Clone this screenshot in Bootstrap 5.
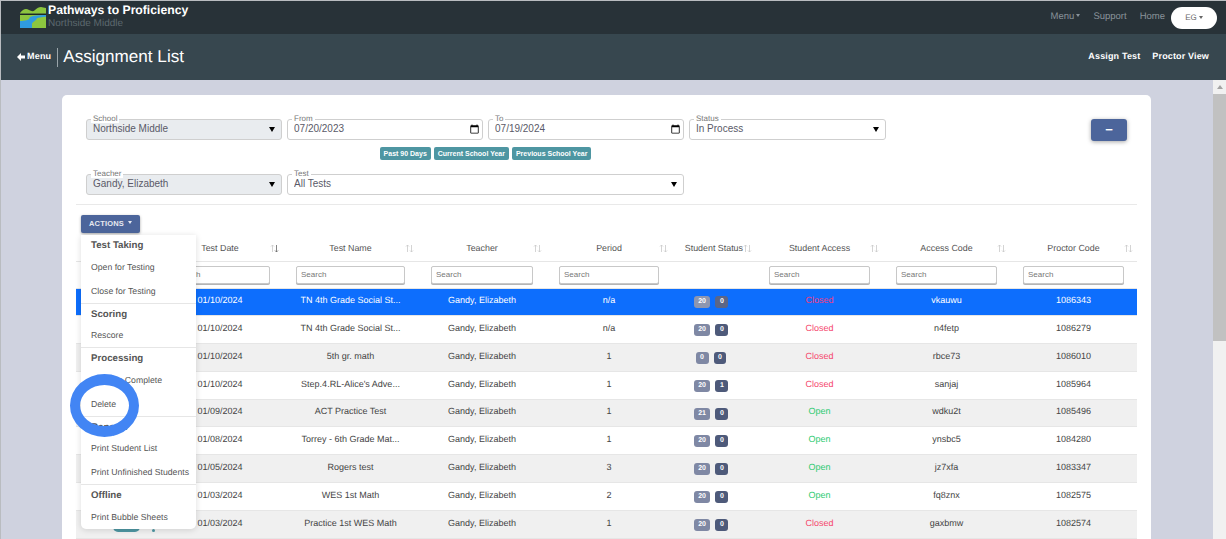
<!DOCTYPE html>
<html lang="en">
<head>
<meta charset="utf-8">
<title>Assignment List</title>
<link href="https://cdn.jsdelivr.net/npm/bootstrap@5.3.0/dist/css/bootstrap.min.css" rel="stylesheet">
<style>
html,body{height:539px;overflow:hidden}
body{font-family:"Liberation Sans",Arial,sans-serif;font-size:10px;color:#495057;background:#cfd2df;border-top:1px solid #b9bcc0;border-left:1px solid #b9bcc0;text-rendering:geometricPrecision}
.top-strip{height:33px;background:#283238;padding:0 9px 0 18px}
.brand-name{color:#fff;font-weight:700;font-size:12.2px;line-height:13px}
.brand-sub{color:#5d696f;font-size:10px;line-height:11px;margin-top:1px}
.brand-text{margin-left:1px;margin-top:-2px}
.top-link{color:#88939a;font-size:9.5px;text-decoration:none}
.top-links{gap:13px}
.caret-mini::after{content:"";display:inline-block;margin-left:2px;vertical-align:2px;border-top:3px solid currentColor;border-left:2.5px solid transparent;border-right:2.5px solid transparent}
.user-pill{width:46px;height:22px;border-radius:11px;background:#fff;color:#666;font-size:8px;margin-left:-7px}
.sub-strip{height:46px;background:#37474f;padding:0 17px 0 16px}
.back-link{color:#fff;font-weight:700;font-size:9px;letter-spacing:.2px;text-decoration:none;gap:2px}
.title-rule{width:1px;height:19px;background:#9aa5aa;margin:0 5px 0 6px}
.page-title{color:#fff;font-size:17.1px;font-weight:400;margin:0;line-height:22px}
.sub-link{color:#fff;font-weight:700;font-size:9px;letter-spacing:.15px;text-decoration:none}
.sub-links{gap:12px}
.stage{min-height:0}
.page-wrap{padding:15px 62px 0 61px;min-width:0}
.sheet{background:#fff;border-radius:5px 5px 0 0;padding:24px 14px 0;height:600px}
.filter-line{padding:0 10px}
.filter-grid{display:grid;grid-template-columns:196px 196px 196px 197px;column-gap:5px}
.fld{position:relative}
.fld-label{position:absolute;left:5px;top:-5px;background:#fff;padding:0 2px;font-size:8px;line-height:9px;color:#777;z-index:2}
.fld-input.form-control,.fld-input.form-select{height:21px;min-height:21px;font-size:10px;line-height:12px;padding:0 6px 1px;border:1px solid #cfcfcf;border-radius:3px;color:#5a5a68;box-shadow:none}
.fld-input.form-select{background-image:url("data:image/svg+xml,%3Csvg xmlns='http://www.w3.org/2000/svg' width='6' height='5'%3E%3Cpath d='M0 0h6L3 5z' fill='%23000'/%3E%3C/svg%3E");background-position:right 6px center;background-size:6px 5px}
.fld-input:disabled{background-color:#e9ecef;opacity:1}
.fld-input::-webkit-calendar-picker-indicator{margin:0;padding:0;width:11px;height:11px;margin-right:-4px}
.fld-input::-webkit-datetime-edit{padding:0}
.chip-line{grid-column:2 / span 2;gap:3px;margin:7px 0 14px}
.chip-btn.btn{background:#4e96a2;border:0;color:#fff;font-size:7px;font-weight:700;line-height:13px;height:13px;padding:0 4px;border-radius:2px}
.wide-field{grid-column:2 / span 2}
.minus-btn.btn{width:36px;height:22px;padding:0;background:#4c659b;border:0;border-radius:3px;color:#fff;font-weight:700;font-size:13px;line-height:20px;box-shadow:0 1px 4px rgba(0,0,0,.35)}
.sheet-rule{border-top:1px solid #e9e9e9;margin:9px 0 10px;height:0}
.actions-wrap{position:relative;margin-left:5px;height:20px;z-index:5}
.actions-btn.btn{width:59px;height:18px;padding:0;background:#4c659b;border:0;border-radius:2px;color:#e6e9f0;font-size:7.5px;font-weight:700;letter-spacing:.2px;box-shadow:0 1px 3px rgba(0,0,0,.35);line-height:18px}
.actions-btn.caret-mini::after{margin-left:4px}
.action-menu.dropdown-menu{display:block;position:absolute;left:0;top:20px;width:115px;min-width:0;height:294px;padding:0;border:0;border-radius:0 0 5px 5px;box-shadow:0 1px 6px rgba(0,0,0,.14);font-size:8.7px}
.action-menu .dropdown-header{color:#555;font-weight:700;font-size:9.7px;padding:0 10px;line-height:12px;margin:5px 0 0}
.action-menu .dropdown-item{color:#555;padding:0 10px;line-height:12px;margin-top:12px;font-size:8.7px;white-space:nowrap}
.action-menu .dropdown-divider{margin:6px 0 0;border-color:#e6e6e6}
.action-menu .dropdown-header+.dropdown-item{margin-top:8.6px}
.assign-table.table{table-layout:fixed;width:1061px;margin:0;font-size:9px;color:#444;--bs-table-striped-bg:#f0f0f0;--bs-table-color:#444;--bs-table-striped-color:#444;--bs-table-border-color:#e6e6e6}
.assign-table td,.assign-table th{text-align:center;vertical-align:middle;padding:0;white-space:nowrap}
.assign-table tbody td{height:27.8px;padding-bottom:2px}
.assign-table tbody td.status-cell{padding-right:6px}
.assign-table .head-row th{height:26px;font-weight:400;color:#555;padding-top:2px;font-size:8.9px}
.head-cell{display:grid;grid-template-columns:1fr auto 1fr;align-items:center}
.head-cell svg{justify-self:end;margin-right:4px}
.assign-table .search-row td{height:27px;padding:0 13px;font-weight:400}
.search-box.form-control{height:18px;min-height:18px;font-size:8px;padding:0 4px;border:1px solid #c8c8c8;border-radius:2px;box-shadow:0 1px 0 #b5b5b5}
.search-box::placeholder{color:#777}
.assign-table tbody tr.picked>td{--bs-table-bg-type:#0d6efd;--bs-table-accent-bg:#0d6efd;--bs-table-color-type:#fff;background:#0d6efd;color:#fff;box-shadow:none}
.assign-table tbody tr>td.is-closed{color:#f5476d}
.assign-table tbody tr.picked>td.is-closed{color:#f23d80}
.assign-table tbody tr>td.is-open{color:#2ecb71}
.count-badge.badge{font-size:7px;font-weight:700;line-height:12px;padding:0 4.5px;min-width:12px;height:12px;border-radius:3px;margin:0 2.5px;background:#7f88a4;vertical-align:-1px}
.count-badge.dark-count{background:#4e5a7a}
.picked .count-badge.badge{background:#8d96b0}
.picked .count-badge.badge.dark-count{background:#5b6687}
.row-tool{display:flex;align-items:center;padding-left:37px}
.tool-pill{width:27px;height:18px;background:#4e96a2;border-radius:5px}
.tool-dot{width:3px;height:18px;margin-left:12px;display:flex;align-items:flex-end}
.tool-dot::after{content:"";width:3px;height:3px;border-radius:50%;background:#4e96a2}
.focus-ring-mark{position:absolute;left:70px;top:374px;width:69px;height:63px;border-style:solid;border-color:#4285f4;border-width:11px 10px;border-radius:50%;z-index:10;pointer-events:none}
.fake-scroll{width:13px;background:#f1f1f1;flex:0 0 13px}
.scroll-arrow{height:14px;display:flex;align-items:center;justify-content:center}
.scroll-arrow::after{content:"";border-bottom:4px solid #a3a3a3;border-left:3.5px solid transparent;border-right:3.5px solid transparent}
.scroll-thumb{height:247px;background:#c1c1c1}
</style>
</head>
<body class="d-flex flex-column">
<nav class="top-strip d-flex align-items-center justify-content-between flex-shrink-0">
  <div class="d-flex align-items-center">
    <svg width="28" height="21" viewBox="0 0 28 21" aria-hidden="true">
      <path d="M1 6C4 2 7 1 10 3c2 1 4 2 6 0 2-2 4-3 6-3l5 1v5.500H1z" fill="#8cc63f"/>
      <path d="M1 7.500h26" stroke="#1d2a22" stroke-width="1"/>
      <path d="M1 8h26v13H1z" fill="#8cc63f"/>
      <path d="M27 8v1.800c-4 .3-9 .7-9.500 2.200-.5 1.800-4.500 3-4.500 5v4H1v-7c5 0 9.500-1 9.500-3S18 8 27 8z" fill="#2f9be0"/>
    </svg>
    <div class="brand-text">
      <div class="brand-name">Pathways to Proficiency</div>
      <div class="brand-sub">Northside Middle</div>
    </div>
  </div>
  <div class="d-flex align-items-center top-links">
    <a class="top-link caret-mini" href="#">Menu</a>
    <a class="top-link" href="#">Support</a>
    <a class="top-link" href="#">Home</a>
    <div class="user-pill caret-mini d-flex align-items-center justify-content-center">EG</div>
  </div>
</nav>
<header class="sub-strip d-flex align-items-center justify-content-between flex-shrink-0">
  <div class="d-flex align-items-center">
    <a class="back-link d-flex align-items-center" href="#">
      <svg width="8" height="8" viewBox="0 0 8 8" aria-hidden="true"><path d="M4 0v2.500h4v3H4V8L0 4z" fill="#fff"/></svg>Menu
    </a>
    <span class="title-rule"></span>
    <h1 class="page-title">Assignment List</h1>
  </div>
  <div class="d-flex sub-links">
    <a class="sub-link" href="#">Assign Test</a>
    <a class="sub-link" href="#">Proctor View</a>
  </div>
</header>
<div class="stage d-flex flex-grow-1 overflow-hidden">
  <main class="page-wrap flex-grow-1">
    <div class="sheet">
      <div class="filter-line d-flex justify-content-between align-items-start">
        <div class="filter-grid">
          <div class="fld"><span class="fld-label">School</span><select class="form-select fld-input" disabled><option>Northside Middle</option></select></div>
          <div class="fld"><span class="fld-label">From</span><input class="form-control fld-input" type="date" value="2023-07-20"></div>
          <div class="fld"><span class="fld-label">To</span><input class="form-control fld-input" type="date" value="2024-07-19"></div>
          <div class="fld"><span class="fld-label">Status</span><select class="form-select fld-input"><option>In Process</option></select></div>
          <div></div>
          <div class="chip-line d-flex justify-content-center">
            <button class="btn chip-btn" type="button">Past 90 Days</button>
            <button class="btn chip-btn" type="button">Current School Year</button>
            <button class="btn chip-btn" type="button">Previous School Year</button>
          </div>
          <div></div>
          <div class="fld"><span class="fld-label">Teacher</span><select class="form-select fld-input" disabled><option>Gandy, Elizabeth</option></select></div>
          <div class="fld wide-field"><span class="fld-label">Test</span><select class="form-select fld-input"><option>All Tests</option></select></div>
        </div>
        <button class="btn minus-btn" type="button">−</button>
      </div>
      <div class="sheet-rule"></div>
      <div class="actions-wrap">
        <button class="btn actions-btn caret-mini" type="button">ACTIONS</button>
        <div class="dropdown-menu action-menu">
          <h6 class="dropdown-header">Test Taking</h6>
          <a class="dropdown-item" href="#">Open for Testing</a>
          <a class="dropdown-item" href="#">Close for Testing</a>
          <hr class="dropdown-divider">
          <h6 class="dropdown-header">Scoring</h6>
          <a class="dropdown-item" href="#">Rescore</a>
          <hr class="dropdown-divider">
          <h6 class="dropdown-header">Processing</h6>
          <a class="dropdown-item" href="#">Mark As Complete</a>
          <a class="dropdown-item" href="#">Delete</a>
          <hr class="dropdown-divider">
          <h6 class="dropdown-header">Reports</h6>
          <a class="dropdown-item" href="#">Print Student List</a>
          <a class="dropdown-item" href="#">Print Unfinished Students</a>
          <hr class="dropdown-divider">
          <h6 class="dropdown-header">Offline</h6>
          <a class="dropdown-item" href="#">Print Bubble Sheets</a>
        </div>
      </div>
      <svg width="0" height="0" class="position-absolute" aria-hidden="true">
        <symbol id="sort-ic" viewBox="0 0 9 9"><path d="M2.500 8V1M1 2.500 2.500 1 4 2.500M6.500 1v7M5 6.500 6.500 8 8 6.500" fill="none" stroke="#c9c9c9" stroke-width=".8"/></symbol>
        <symbol id="sort-down" viewBox="0 0 9 9"><path d="M2.500 8V1M1 2.500 2.500 1 4 2.500" fill="none" stroke="#c9c9c9" stroke-width=".8"/><path d="M6.500 1v7M5 6.500 6.500 8 8 6.500" fill="none" stroke="#666" stroke-width=".8"/></symbol>
      </svg>
      <table class="table table-striped assign-table">
        <colgroup><col style="width:81px"><col style="width:126px"><col style="width:135px"><col style="width:128px"><col style="width:126px"><col style="width:84px"><col style="width:127px"><col style="width:127px"><col style="width:127px"></colgroup>
        <thead>
          <tr class="head-row">
            <th></th>
            <th><div class="head-cell"><span></span><span>Test Date</span><svg width="9" height="9"><use href="#sort-down"/></svg></div></th>
            <th><div class="head-cell"><span></span><span>Test Name</span><svg width="9" height="9"><use href="#sort-ic"/></svg></div></th>
            <th><div class="head-cell"><span></span><span>Teacher</span><svg width="9" height="9"><use href="#sort-ic"/></svg></div></th>
            <th><div class="head-cell"><span></span><span>Period</span><svg width="9" height="9"><use href="#sort-ic"/></svg></div></th>
            <th><div class="head-cell"><span></span><span>Student Status</span><svg width="9" height="9"><use href="#sort-ic"/></svg></div></th>
            <th><div class="head-cell"><span></span><span>Student Access</span><svg width="9" height="9"><use href="#sort-ic"/></svg></div></th>
            <th><div class="head-cell"><span></span><span>Access Code</span><svg width="9" height="9"><use href="#sort-ic"/></svg></div></th>
            <th><div class="head-cell"><span></span><span>Proctor Code</span><svg width="9" height="9"><use href="#sort-ic"/></svg></div></th>
          </tr>
          <tr class="search-row">
            <td></td>
            <td><input class="form-control search-box" placeholder="Search"></td>
            <td><input class="form-control search-box" placeholder="Search"></td>
            <td><input class="form-control search-box" placeholder="Search"></td>
            <td><input class="form-control search-box" placeholder="Search"></td>
            <td></td>
            <td><input class="form-control search-box" placeholder="Search"></td>
            <td><input class="form-control search-box" placeholder="Search"></td>
            <td><input class="form-control search-box" placeholder="Search"></td>
          </tr>
        </thead>
        <tbody>
          <tr class="picked"><td></td><td>01/10/2024</td><td>TN 4th Grade Social St...</td><td>Gandy, Elizabeth</td><td>n/a</td><td class="status-cell"><span class="badge count-badge">20</span><span class="badge count-badge dark-count">0</span></td><td class="is-closed">Closed</td><td>vkauwu</td><td>1086343</td></tr>
          <tr><td></td><td>01/10/2024</td><td>TN 4th Grade Social St...</td><td>Gandy, Elizabeth</td><td>n/a</td><td class="status-cell"><span class="badge count-badge">20</span><span class="badge count-badge dark-count">0</span></td><td class="is-closed">Closed</td><td>n4fetp</td><td>1086279</td></tr>
          <tr><td></td><td>01/10/2024</td><td>5th gr. math</td><td>Gandy, Elizabeth</td><td>1</td><td class="status-cell"><span class="badge count-badge">0</span><span class="badge count-badge dark-count">0</span></td><td class="is-closed">Closed</td><td>rbce73</td><td>1086010</td></tr>
          <tr><td></td><td>01/10/2024</td><td>Step.4.RL-Alice's Adve...</td><td>Gandy, Elizabeth</td><td>1</td><td class="status-cell"><span class="badge count-badge">20</span><span class="badge count-badge dark-count">1</span></td><td class="is-closed">Closed</td><td>sanjaj</td><td>1085964</td></tr>
          <tr><td></td><td>01/09/2024</td><td>ACT Practice Test</td><td>Gandy, Elizabeth</td><td>1</td><td class="status-cell"><span class="badge count-badge">21</span><span class="badge count-badge dark-count">0</span></td><td class="is-open">Open</td><td>wdku2t</td><td>1085496</td></tr>
          <tr><td></td><td>01/08/2024</td><td>Torrey - 6th Grade Mat...</td><td>Gandy, Elizabeth</td><td>1</td><td class="status-cell"><span class="badge count-badge">20</span><span class="badge count-badge dark-count">0</span></td><td class="is-open">Open</td><td>ynsbc5</td><td>1084280</td></tr>
          <tr><td></td><td>01/05/2024</td><td>Rogers test</td><td>Gandy, Elizabeth</td><td>3</td><td class="status-cell"><span class="badge count-badge">20</span><span class="badge count-badge dark-count">0</span></td><td class="is-open">Open</td><td>jz7xfa</td><td>1083347</td></tr>
          <tr><td></td><td>01/03/2024</td><td>WES 1st Math</td><td>Gandy, Elizabeth</td><td>2</td><td class="status-cell"><span class="badge count-badge">20</span><span class="badge count-badge dark-count">0</span></td><td class="is-open">Open</td><td>fq8znx</td><td>1082575</td></tr>
          <tr><td><div class="row-tool"><span class="tool-pill"></span><span class="tool-dot"></span></div></td><td>01/03/2024</td><td>Practice 1st WES Math</td><td>Gandy, Elizabeth</td><td>1</td><td class="status-cell"><span class="badge count-badge">20</span><span class="badge count-badge dark-count">0</span></td><td class="is-closed">Closed</td><td>gaxbmw</td><td>1082574</td></tr>
        </tbody>
      </table>
    </div>
  </main>
  <aside class="fake-scroll d-flex flex-column" aria-hidden="true">
    <div class="scroll-arrow"></div>
    <div class="scroll-thumb"></div>
  </aside>
</div>
<div class="focus-ring-mark"></div>
<script src="https://cdn.jsdelivr.net/npm/bootstrap@5.3.0/dist/js/bootstrap.bundle.min.js"></script>
</body>
</html>
